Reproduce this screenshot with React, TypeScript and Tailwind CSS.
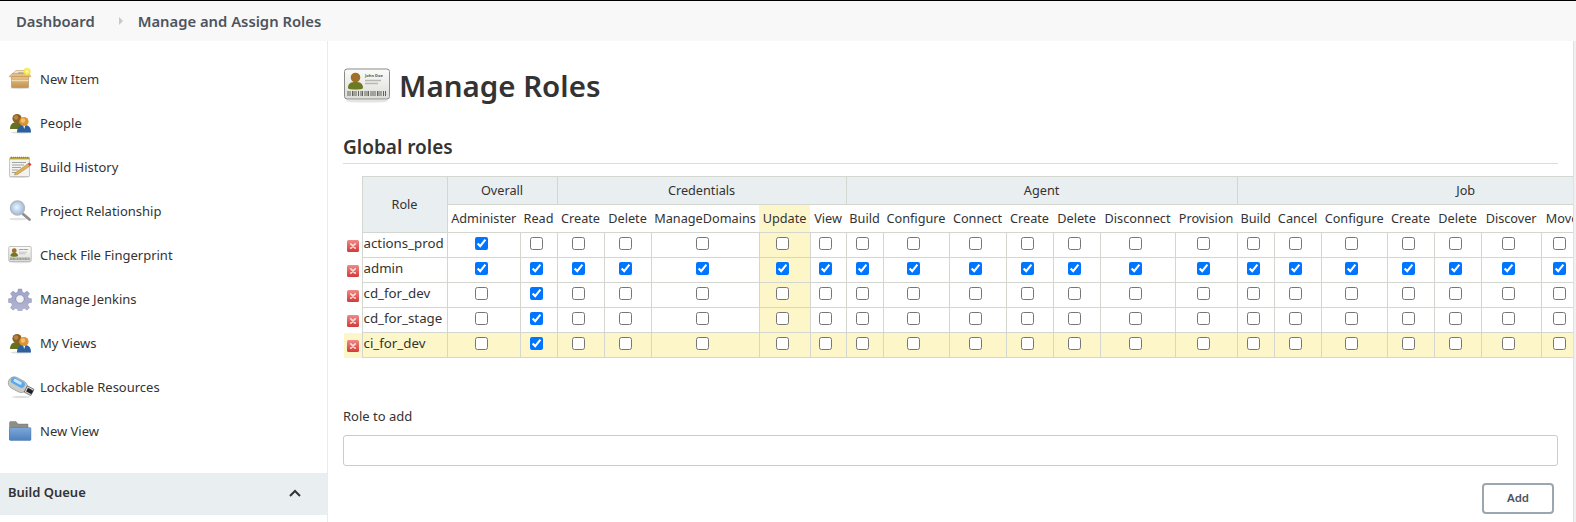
import React from "react";

const BoxIcon = () => (
  <svg viewBox="0 0 24 24" className="w-6 h-6 shrink-0">
    <defs>
      <linearGradient id="bx" x1="0" y1="0" x2="0" y2="1"><stop offset="0" stopColor="#e8c48a" /><stop offset="1" stopColor="#c4924e" /></linearGradient>
      <radialGradient id="st"><stop offset="0" stopColor="#fffbd0" /><stop offset="0.6" stopColor="#f6e640" /><stop offset="1" stopColor="#f6e640" stopOpacity="0" /></radialGradient>
    </defs>
    <ellipse cx="12" cy="21" rx="10" ry="1.2" fill="#ddd" />
    <path d="M4 7 L8 3.500 H19 L21 7 Z" fill="#efe3cb" stroke="#b08d58" strokeWidth="0.5" />
    <path d="M10 5.500 h8 v1 h-8z" fill="#9a8a70" />
    <path d="M1 9.500 L4 6.500 H21 L23 9.500 L20 10.500 H4Z" fill="#e2bd84" stroke="#b08d58" strokeWidth="0.4" />
    <rect x="3.500" y="9.500" width="17" height="11" rx="0.5" fill="url(#bx)" stroke="#a97f45" strokeWidth="0.5" />
    <rect x="3.500" y="13" width="17" height="1.200" fill="#f0d9ad" />
    <circle cx="19" cy="4.500" r="4.500" fill="url(#st)" />
  </svg>
);

const PeopleIcon = () => (
  <svg viewBox="0 0 24 24" className="w-6 h-6 shrink-0">
    <ellipse cx="13" cy="21.500" rx="10" ry="1" fill="#ddd" />
    <path d="M2 18 C2 12 6 11 9 11 C13 11 15 13 15 18 Z" fill="#66711f" />
    <circle cx="9" cy="7.500" r="4.600" fill="#8f5f22" />
    <circle cx="8" cy="6.500" r="2.200" fill="#b58545" />
    <path d="M9 21.500 C9 15.500 12 14 16 14 C20 14 23 15.500 23 21.500 Z" fill="#2b5f9e" />
    <path d="M15 14 h2.400 l-1.200 4z" fill="#fff" />
    <circle cx="16" cy="10.500" r="4.600" fill="#dd9534" />
    <circle cx="15" cy="9.500" r="2.200" fill="#f3bf72" />
  </svg>
);

const NotepadIcon = () => (
  <svg viewBox="0 0 24 24" className="w-6 h-6 shrink-0">
    <ellipse cx="11" cy="22" rx="10" ry="1" fill="#ddd" />
    <rect x="1.500" y="3" width="20" height="18.500" rx="0.5" fill="#f2f2ef" stroke="#a6a6a0" strokeWidth="0.6" />
    <rect x="2" y="2" width="19.500" height="2.400" fill="#b9a33d" />
    <path d="M3 2.200h1M5 2.200h1M7 2.200h1M9 2.200h1M11 2.200h1M13 2.200h1M15 2.200h1M17 2.200h1M19 2.200h1" stroke="#6d6028" strokeWidth="0.7" />
    <path d="M4 7.500h14M4 10h12M4 12.500h9M4 15h6M4 17.500h5" stroke="#9b9b97" strokeWidth="0.9" />
    <path d="M7 18 L19.500 9 L22 11 L9.500 19.500 L6.500 20 Z" fill="#dfae53" stroke="#9b7430" strokeWidth="0.4" />
    <path d="M19.500 9 L21.500 7.500 L23.500 9.500 L22 11Z" fill="#d8403a" />
  </svg>
);

const SearchIcon = () => (
  <svg viewBox="0 0 24 24" className="w-6 h-6 shrink-0">
    <defs>
      <radialGradient id="gl" cx="0.45" cy="0.45"><stop offset="0" stopColor="#eef5fc" /><stop offset="1" stopColor="#9fc0e4" /></radialGradient>
    </defs>
    <ellipse cx="10" cy="20" rx="9" ry="1.300" fill="#e4e4e4" />
    <path d="M15 15 L21.500 20.500" stroke="#8d8f8c" strokeWidth="2.800" strokeLinecap="round" />
    <circle cx="9.500" cy="9" r="7" fill="url(#gl)" stroke="#b4b8bb" strokeWidth="1.400" />
  </svg>
);

const CardIcon = ({ className }: { className: string }) => (
  <svg viewBox="0 0 48 36" className={className}>
    <defs>
      <linearGradient id="cd" x1="0" y1="0" x2="0" y2="1"><stop offset="0" stopColor="#fbfbfa" /><stop offset="1" stopColor="#dcdcd8" /></linearGradient>
    </defs>
    <ellipse cx="24" cy="33" rx="21" ry="1.600" fill="#e4e4e4" />
    <rect x="1.500" y="1" width="45" height="30" rx="2.500" fill="url(#cd)" stroke="#8b8b87" />
    <path d="M5 20 C5 15 8 14 12.500 14 C17 14 20 15 20 20 C20 22 5 22 5 20Z" fill="#6e7a22" />
    <circle cx="12.500" cy="9.500" r="4.800" fill="#a06f2c" />
    <text x="22" y="8.500" fontSize="4" fontWeight="700" fill="#55554f" fontFamily="'Noto Sans',sans-serif">John Doe</text>
    <path d="M22 12.500h16M22 15.500h13" stroke="#b6b6b2" strokeWidth="1.400" />
    <path d="M5 23v5M7 23v5M9.500 23v5M11 23v5M13 23v5M15.500 23v5M18 23v5M19.500 23v5M22 23v5M24 23v5M25.500 23v5M28 23v5M30 23v5M32 23v5M34.500 23v5M36 23v5M38 23v5M40.500 23v5M42.500 23v5" stroke="#55554f" strokeWidth="0.9" />
  </svg>
);

const GearIcon = () => (
  <svg viewBox="0 0 24 24" className="w-6 h-6 shrink-0">
    <defs>
      <linearGradient id="gr" x1="0" y1="0" x2="0" y2="1"><stop offset="0" stopColor="#9ea3c6" /><stop offset="1" stopColor="#b4b6d4" /></linearGradient>
    </defs>
    <g fill="url(#gr)" stroke="#7f84a8" strokeWidth="0.4">
      <path d="M10 .8h4l.6 3.500 2.200.9 3-2 2.800 2.800-2 3 .9 2.200 3.300.6v4l-3.300.6-.9 2.200 2 3-2.800 2.800-3-2-2.200.9-.6 2.900h-4l-.6-2.900-2.200-.9-3 2-2.800-2.800 2-3-.9-2.200-3.300-.6v-4l3.300-.6.9-2.200-2-3 2.800-2.800 3 2 2.200-.9z" transform="translate(1.200 1.200) scale(.9)" />
    </g>
    <circle cx="12" cy="12" r="4.200" fill="#f4f4f6" stroke="#73779b" strokeWidth="0.6" />
  </svg>
);

const UsbIcon = () => (
  <svg viewBox="0 0 24 24" className="w-6 h-6 shrink-0 overflow-visible">
    <ellipse cx="13" cy="22" rx="9" ry="1" fill="#ddd" />
    <g transform="rotate(28 12 12)">
      <rect x="-1" y="5" width="20" height="12" rx="6" fill="#c9ccc9" stroke="#8b8e8b" strokeWidth="0.6" />
      <rect x="0.500" y="5.800" width="15" height="6.500" rx="3.200" fill="#5aa7ea" />
      <rect x="3" y="7" width="9" height="3" rx="1.500" fill="#c8e5fb" />
      <rect x="18" y="7.500" width="7.500" height="7" fill="#dcdcdc" stroke="#444" strokeWidth="0.6" />
      <rect x="19.500" y="9" width="6" height="4" fill="#222" />
    </g>
  </svg>
);

const FolderIcon = () => (
  <svg viewBox="0 0 24 24" className="w-6 h-6 shrink-0">
    <defs>
      <linearGradient id="fd" x1="0" y1="0" x2="0" y2="1"><stop offset="0" stopColor="#7fa8d8" /><stop offset="1" stopColor="#4d80bd" /></linearGradient>
    </defs>
    <path d="M1.500 21 V3.500 C1.500 3 2 2.500 2.500 2.500 H8 L10 5 H20 V9 H3Z" fill="#8d8d89" stroke="#6d6d6a" strokeWidth="0.4" />
    <path d="M2 8.500 H22 C22.500 8.500 23 9 23 9.500 V20.500 C23 21 22.500 21.500 22 21.500 H2.500 C2 21.500 1.500 21 1.500 20.500 V9Z" fill="url(#fd)" stroke="#456f9f" strokeWidth="0.4" />
  </svg>
);

const DeleteIcon = () => (
  <svg viewBox="0 0 12 12" className="w-3 h-3 block">
    <defs>
      <linearGradient id="dl" x1="0" y1="0" x2="0" y2="1"><stop offset="0" stopColor="#f08a88" /><stop offset="1" stopColor="#d23b38" /></linearGradient>
    </defs>
    <rect x="0" y="0" width="12" height="12" rx="1.500" fill="url(#dl)" />
    <path d="M3.800 3.800 L8.200 8.200 M8.200 3.800 L3.800 8.200" stroke="#f7dcdb" strokeWidth="1.700" strokeLinecap="round" />
  </svg>
);

const items: [string, React.ReactNode][] = [
  ["New Item", <BoxIcon />],
  ["People", <PeopleIcon />],
  ["Build History", <NotepadIcon />],
  ["Project Relationship", <SearchIcon />],
  ["Check File Fingerprint", <CardIcon className="w-6 h-6 shrink-0" />],
  ["Manage Jenkins", <GearIcon />],
  ["My Views", <PeopleIcon />],
  ["Lockable Resources", <UsbIcon />],
  ["New View", <FolderIcon />],
];

const groups: { name: string; cols: [string, number][] }[] = [
  { name: "Overall", cols: [["Administer", 73], ["Read", 37]] },
  { name: "Credentials", cols: [["Create", 47], ["Delete", 47], ["ManageDomains", 108], ["Update", 51], ["View", 36]] },
  { name: "Agent", cols: [["Build", 37], ["Configure", 66], ["Connect", 57], ["Create", 47], ["Delete", 47], ["Disconnect", 75], ["Provision", 62]] },
  { name: "Job", cols: [["Build", 37], ["Cancel", 47], ["Configure", 66], ["Create", 47], ["Delete", 47], ["Discover", 60], ["Move", 42], ["Read", 38], ["Workspace", 73]] },
];

const allCols = groups.flatMap((g) => g.cols);

const roles: { name: string; checked: (i: number) => boolean }[] = [
  { name: "actions_prod", checked: (i) => i === 0 },
  { name: "admin", checked: () => true },
  { name: "cd_for_dev", checked: (i) => i === 1 },
  { name: "cd_for_stage", checked: (i) => i === 1 },
  { name: "ci_for_dev", checked: (i) => i === 1 },
];

const UPDATE = 5;

export default function App() {
  return (
    <div className="h-[522px] w-[1576px] overflow-hidden bg-white font-['Noto_Sans',sans-serif] text-[#333]">
      <div className="h-px bg-black" />
      <nav className="h-10 bg-[#f8f8f8] flex items-center pl-4 text-[14.8px] font-semibold text-[#4d545d]">
        <span>Dashboard</span>
        <span className="ml-[24px] mr-[15px] w-0 h-0 border-y-[4px] border-y-transparent border-l-[4px] border-l-[#c8c8c8]" />
        <span>Manage and Assign Roles</span>
      </nav>
      <div className="flex h-[481px]">
        <aside className="w-[328px] shrink-0 border-r border-[#e9eced] pt-4 text-[13px]">
          {items.map(([label, icon]) => (
            <div key={label} className="h-11 flex items-center gap-2 pl-2">
              {icon}
              <span className="mt-[2px]">{label}</span>
            </div>
          ))}
          <div className="mt-5 h-[42px] bg-[#e9eef0] flex items-center justify-between pl-2 pr-[26px] pb-[2px] text-[13px] font-semibold">
            <span>Build Queue</span>
            <svg viewBox="0 0 12 8" className="w-3 h-2" fill="none" stroke="#333" strokeWidth="2"><path d="M1 7 L6 2 L11 7" /></svg>
          </div>
        </aside>
        <main className="flex-1 min-w-0 flex">
          <div className="flex-1 min-w-0 pl-[15px] pr-[15px] overflow-hidden">
            <div className="flex items-center h-[48px] mt-[21px]">
              <CardIcon className="w-12 h-9 shrink-0" />
              <h1 className="ml-2 text-[29.5px] leading-none font-semibold text-[#333]">Manage Roles</h1>
            </div>
            <h2 className="mt-[25px] h-[26px] pb-[2px] text-[19px] leading-[24px] font-semibold text-[#333] border-b border-[#dcdcdc] box-content mb-[12px]">Global roles</h2>
            <div className="ml-px w-[1230px] overflow-hidden">
              <table className="table-fixed border-collapse text-[12.7px] leading-none w-[1350px]">
                <colgroup>
                  <col className="w-[18px]" />
                  <col className="w-[85px]" />
                  {allCols.map(([n, w], i) => (
                    <col key={i} style={{ width: w }} />
                  ))}
                </colgroup>
                <thead>
                  <tr className="h-7">
                    <th rowSpan={2} className="p-0 border-0" />
                    <th rowSpan={2} className="p-0 font-normal bg-[#e9eef0] border border-[#d3d7cf]">Role</th>
                    {groups.map((g) => (
                      <th key={g.name} colSpan={g.cols.length} className="p-0 font-normal bg-[#e9eef0] border border-[#d3d7cf]">{g.name}</th>
                    ))}
                  </tr>
                  <tr className="h-7">
                    {allCols.map(([n], i) => (
                      <th key={i} className={`p-0 font-normal whitespace-nowrap border-y border-[#d3d7cf] ${i === UPDATE ? "bg-[#fdf6c8]" : ""}`}>{n}</th>
                    ))}
                  </tr>
                </thead>
                <tbody>
                  {roles.map((r, ri) => {
                    const hi = ri === 4;
                    return (
                      <tr key={r.name} className={`h-[25px] ${hi ? "bg-[#fdf6c8]" : ""}`}>
                        <td className="p-0 border-0">
                          <div className="flex justify-center pt-[1px]">
                            <DeleteIcon />
                          </div>
                        </td>
                        <td className="p-0 pl-[1px] pb-[2px] text-[13.3px] border border-[#d3d7cf] whitespace-nowrap">{r.name}</td>
                        {allCols.map(([n], i) => (
                          <td key={i} className={`p-0 border border-[#d3d7cf] ${i === UPDATE ? "bg-[#fdf6c8]" : ""}`}>
                            <div className="flex justify-center pr-[5px] pb-[4px]">
                              <input type="checkbox" readOnly checked={r.checked(i)} className="m-0" />
                            </div>
                          </td>
                        ))}
                      </tr>
                    );
                  })}
                </tbody>
              </table>
            </div>
            <div className="mt-[49px] text-[13px] leading-[18px] text-[#333]">Role to add</div>
            <input type="text" className="block mt-[10px] w-full h-[31px] border border-[#c8ccce] rounded-[3px] bg-white" />
            <div className="flex justify-end mt-[17px] pr-[4px]">
              <button className="w-[72px] h-[31px] pb-[2px] border-2 border-[#9aa7b0] rounded-[4px] bg-white text-[11.5px] font-semibold text-[#4d545d]">Add</button>
            </div>
          </div>
          <div className="w-[3px] shrink-0 bg-[#f0f0f0] border-l border-[#e0e0e0]" />
        </main>
      </div>
    </div>
  );
}
